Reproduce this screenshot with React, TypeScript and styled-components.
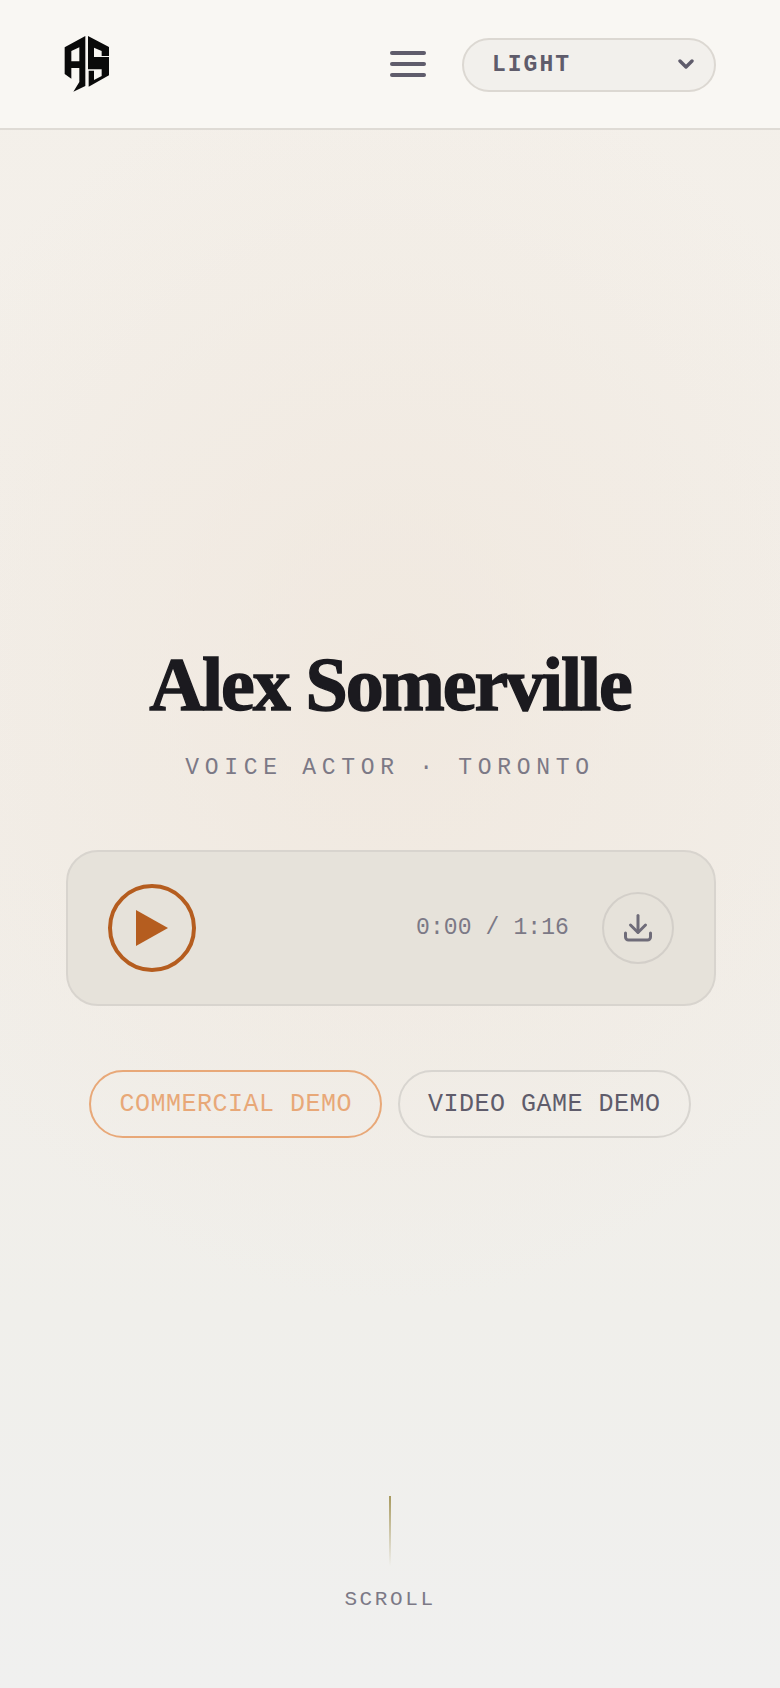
import { FunctionComponent } from 'react';
import styled, { createGlobalStyle } from 'styled-components';

const GlobalStyle = createGlobalStyle`
    * {
        box-sizing: border-box;
    }
    html,
    body {
        margin: 0;
        padding: 0;
        background: #f0f0ee;
    }
`;

const mono = `'Liberation Mono', 'DejaVu Sans Mono', monospace`;

const Page = styled.div`
    width: 780px;
    height: 1688px;
    display: flex;
    flex-direction: column;
    overflow: hidden;
    background:
        radial-gradient(
            ellipse 540px 620px at 390px 680px,
            rgba(240, 231, 221, 0.8) 0%,
            rgba(240, 231, 221, 0) 100%
        ),
        linear-gradient(180deg, #f4f0ea 0%, #f2eee8 50%, #f0efeb 78%, #f0f0ef 100%);
`;

const Header = styled.header`
    height: 130px;
    flex: none;
    display: flex;
    align-items: center;
    padding: 0 64px;
    background: #f9f7f3;
    border-bottom: 2px solid #dfdbd5;
`;

const Logo = styled.svg`
    width: 46px;
    height: 58px;
    margin-bottom: 1px;
`;

const Menu = styled.button`
    width: 36px;
    height: 26px;
    margin-left: auto;
    margin-right: 36px;
    padding: 0;
    border: 0;
    background: none;
    display: flex;
    flex-direction: column;
    justify-content: space-between;
    span {
        height: 4px;
        border-radius: 2px;
        background: #5f5c6b;
    }
`;

const ThemeSelect = styled.div`
    width: 254px;
    height: 54px;
    margin-top: 1px;
    display: flex;
    align-items: center;
    justify-content: space-between;
    padding: 0 20px 0 28px;
    border: 2px solid #dcd8d2;
    border-radius: 27px;
    background: #f2f0ec;
    color: #5f5c6b;
    font: 700 23px ${mono};
    letter-spacing: 2px;
`;

const Hero = styled.main`
    flex: 1;
    display: flex;
    flex-direction: column;
    align-items: center;
    padding-top: 509px;
`;

const Title = styled.h1`
    margin: 0;
    font: 700 76px/90px 'Liberation Serif', serif;
    letter-spacing: -2.1px;
    color: #1b1a1f;
    -webkit-text-stroke: 1.4px #1b1a1f;
`;

const Subtitle = styled.p`
    margin: 23px 0 0;
    font: 400 23px/32px ${mono};
    letter-spacing: 5.7px;
    color: #7c7986;
`;

const Player = styled.section`
    width: 650px;
    height: 156px;
    margin-top: 66px;
    margin-left: 2px;
    display: flex;
    align-items: center;
    padding: 0 40px;
    border: 2px solid #d8d4ce;
    border-radius: 32px;
    background: #e6e2da;
`;

const PlayButton = styled.button`
    width: 88px;
    height: 88px;
    flex: none;
    display: flex;
    align-items: center;
    justify-content: center;
    padding: 0;
    border: 4px solid #b55d1f;
    border-radius: 50%;
    background: none;
    svg {
        display: block;
    }
`;

const Time = styled.span`
    margin-left: auto;
    margin-right: 33px;
    font: 400 23px ${mono};
    letter-spacing: 0.1px;
    color: #7c7986;
`;

const DownloadButton = styled.button`
    width: 72px;
    height: 72px;
    flex: none;
    display: flex;
    align-items: center;
    justify-content: center;
    padding: 0;
    border: 2px solid #d3cfc9;
    border-radius: 50%;
    background: none;
    color: #6f6c79;
`;

const Tabs = styled.div`
    display: flex;
    gap: 16px;
    margin-top: 64px;
`;

const Tab = styled.button<{ $active?: boolean }>`
    height: 68px;
    padding: 0 28px;
    border: 2px solid ${(p) => (p.$active ? '#e8a878' : '#d8d5d0')};
    border-radius: 34px;
    background: none;
    color: ${(p) => (p.$active ? '#e8a878' : '#5f5c6b')};
    font: 400 25px ${mono};
    letter-spacing: 0.5px;
    white-space: nowrap;
`;

const ScrollCue = styled.div`
    margin-top: auto;
    padding-bottom: 76px;
    display: flex;
    flex-direction: column;
    align-items: center;
    gap: 22px;
    color: #7c7986;
    font: 400 21px/24px ${mono};
    letter-spacing: 2.6px;
`;

const ScrollLine = styled.div`
    width: 2px;
    height: 70px;
    background: linear-gradient(180deg, #a89a5f 0%, rgba(168, 154, 95, 0) 100%);
`;

const ASLogo: FunctionComponent = () => (
    <Logo viewBox="190 106 138 172" aria-label="AS">
        <path
            fill="#0a0a0a"
            fillRule="evenodd"
            d="M254 108 L192 142 V222 L212 236 V204 H236 V246 L218 275 L254 258 Z M212 153 L236 142 V184 H212 Z"
        />
        <path
            fill="#0a0a0a"
            d="M262 108 L325 141 V168 H303 V153 L280 143 V171 H325 V226 L264 260 V212 H280 V240 L303 228 V208 H262 Z"
        />
    </Logo>
);

const App: FunctionComponent = () => {
    return (
        <>
            <GlobalStyle />
            <Page>
                <Header>
                    <ASLogo />
                    <Menu aria-label="Menu">
                        <span />
                        <span />
                        <span />
                    </Menu>
                    <ThemeSelect>
                        LIGHT
                        <svg width="16" height="11" viewBox="0 0 16 11" fill="none">
                            <path
                                d="M2 2 L8 8 L14 2"
                                stroke="#5f5c6b"
                                strokeWidth="3.4"
                                strokeLinecap="round"
                                strokeLinejoin="round"
                            />
                        </svg>
                    </ThemeSelect>
                </Header>
                <Hero>
                    <Title>Alex Somerville</Title>
                    <Subtitle>VOICE ACTOR · TORONTO</Subtitle>
                    <Player>
                        <PlayButton aria-label="Play">
                            <svg width="32" height="36" viewBox="0 0 32 36">
                                <path d="M0 0 L32 18 L0 36 Z" fill="#b55d1f" />
                            </svg>
                        </PlayButton>
                        <Time>0:00 / 1:16</Time>
                        <DownloadButton aria-label="Download">
                            <svg width="28" height="28" viewBox="0 0 28 28" fill="none" stroke="currentColor" strokeWidth="3" strokeLinecap="round" strokeLinejoin="round">
                                <path d="M14 1.5 V18" />
                                <path d="M6.5 11 L14 18.5 L21.5 11" />
                                <path d="M1.5 19 V23 A3 3 0 0 0 4.5 26 H23.5 A3 3 0 0 0 26.5 23 V19" />
                            </svg>
                        </DownloadButton>
                    </Player>
                    <Tabs>
                        <Tab $active>COMMERCIAL DEMO</Tab>
                        <Tab>VIDEO GAME DEMO</Tab>
                    </Tabs>
                    <ScrollCue>
                        <ScrollLine />
                        SCROLL
                    </ScrollCue>
                </Hero>
            </Page>
        </>
    );
};

export default App;
